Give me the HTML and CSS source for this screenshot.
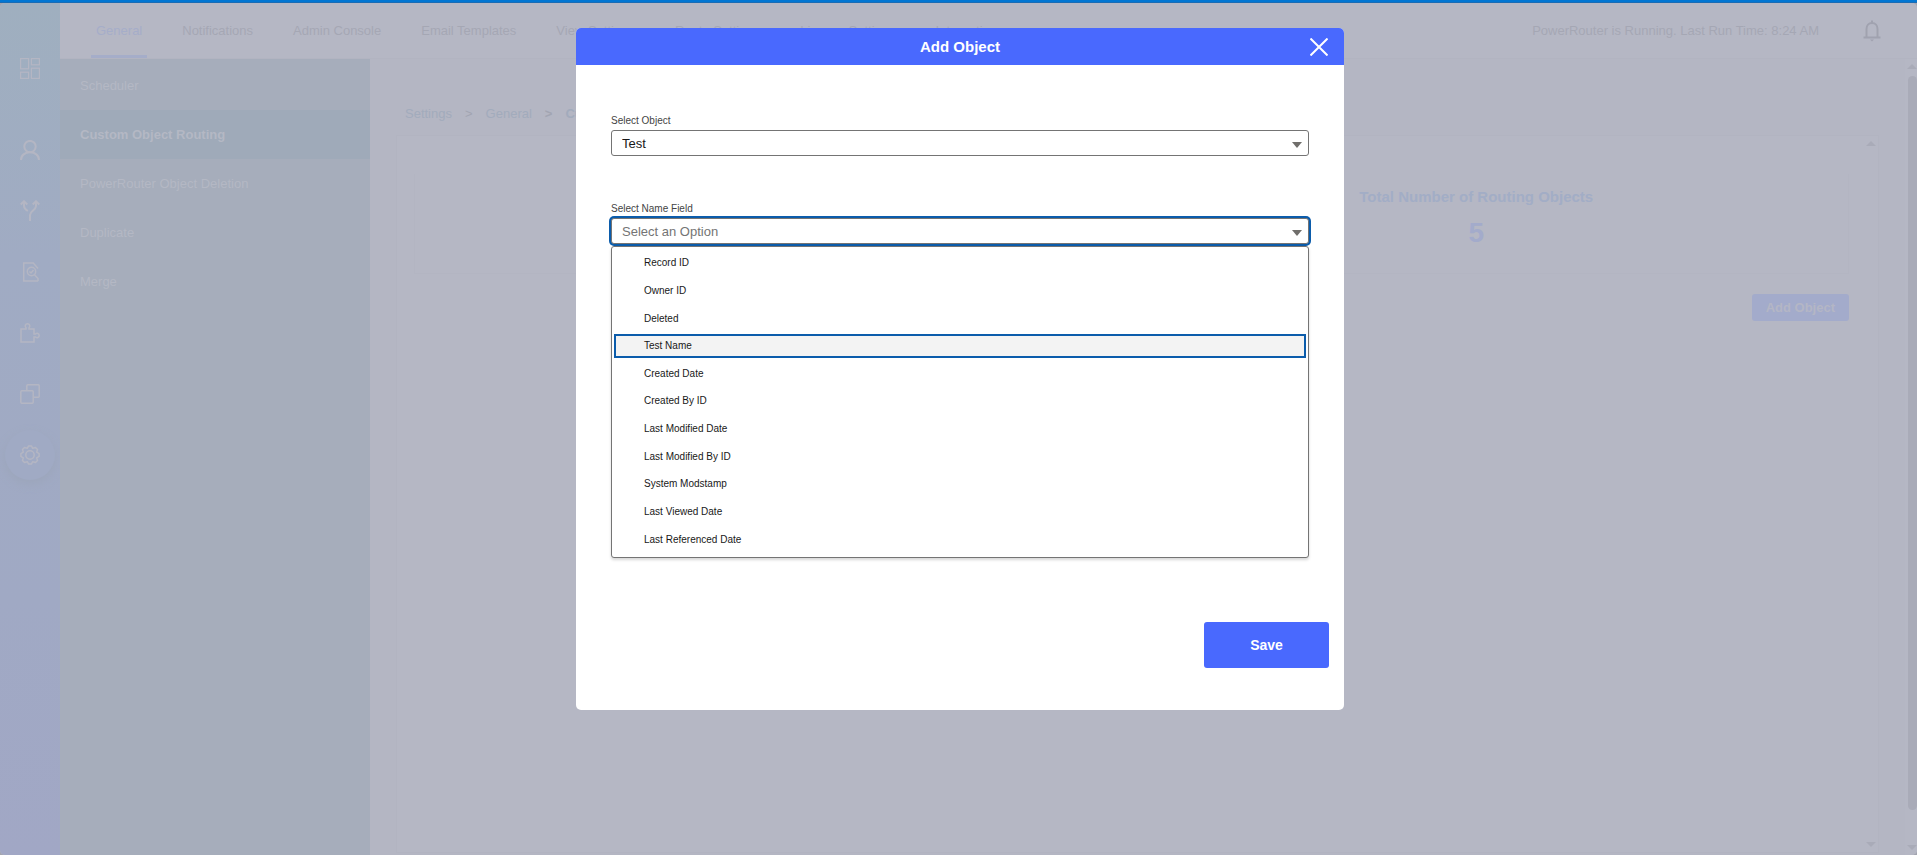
FILE: index.html
```html
<!DOCTYPE html>
<html lang="en">
<head>
    <meta charset="UTF-8">
    <title>PowerRouter - Custom Object Routing</title>
    <link rel="stylesheet" href="styles.css">
</head>
<body>
    <div class="top-strip"></div>

    <div class="app">
        <nav class="rail" aria-label="Main">
            <a href="#" class="rail-link rail-home" aria-label="Dashboard">
                <svg width="20" height="21" viewBox="0 0 20 21" fill="none" stroke="currentColor" stroke-width="1.2">
                    <rect x="0.6" y="0.6" width="8" height="10.2"/>
                    <rect x="11.4" y="0.6" width="8" height="6.2"/>
                    <rect x="0.6" y="14.2" width="8" height="6.2"/>
                    <rect x="11.4" y="10.2" width="8" height="10.2"/>
                </svg>
            </a>
            <a href="#" class="rail-link" aria-label="Users">
                <svg width="20" height="20" viewBox="0 0 20 20" fill="none" stroke="currentColor" stroke-width="2">
                    <circle cx="10" cy="6.6" r="5.7"/>
                    <path d="M1 20c0-4.800 4-7.700 9-7.700s9 2.900 9 7.700"/>
                </svg>
            </a>
            <a href="#" class="rail-link" aria-label="Routes">
                <svg width="20" height="21" viewBox="0 0 20 21" fill="none" stroke="currentColor" stroke-width="2">
                    <path d="M10 21v-6c0-4 6-5 6-9V1.500M4 1.500V6c0 2.200 1.800 3.700 3.800 5"/>
                    <path d="M0.700 4.500L4 1.300l3.300 3.200M12.700 4.500L16 1.300l3.300 3.200"/>
                </svg>
            </a>
            <a href="#" class="rail-link" aria-label="Logs">
                <svg width="20" height="20" viewBox="0 0 20 20" fill="none" stroke="currentColor" stroke-width="1.500">
                    <path d="M18 6.500L13.300 1H3.700v18h14.500"/>
                    <circle cx="11.500" cy="9.500" r="4.200"/>
                    <path d="M9.500 9.500l1.500 1.500 2.500-3M14.500 12.700l3.500 3.800v2.500"/>
                </svg>
            </a>
            <a href="#" class="rail-link" aria-label="Integrations">
                <svg width="20" height="20" viewBox="0 0 20 20" fill="none" stroke="currentColor" stroke-width="1.500">
                    <path d="M1 6h5V4.800C4.500 3 5.300 0.800 7.500 0.800S10.500 3 9 4.800V6h5v5h1.500c1.500-1.300 3.700-.6 3.700 1.500s-2.200 2.800-3.700 1.500H14v5H1z"/>
                </svg>
            </a>
            <a href="#" class="rail-link" aria-label="Duplicates">
                <svg width="20" height="20" viewBox="0 0 20 20" fill="none" stroke="currentColor" stroke-width="1.500">
                    <rect x="0.800" y="6.800" width="12.400" height="12.400" rx="1"/>
                    <path d="M6.800 6.500V1.800a1 1 0 0 1 1-1h10.400a1 1 0 0 1 1 1v10.400a1 1 0 0 1-1 1h-4.700"/>
                </svg>
            </a>
            <a href="#" class="rail-link" aria-label="Settings">
                <span class="rail-active">
                    <svg width="20" height="20" viewBox="0 0 20 20" fill="none" stroke="currentColor" stroke-width="1.500" stroke-linejoin="round">
                        <path d="M8.600 0.900h2.800l1.300 2.400 2.800-.8 2 2-.8 2.700 2.400 1.400v2.800l-2.400 1.400.8 2.700-2 2-2.800-.8-1.300 2.400H8.600l-1.300-2.400-2.800.8-2-2 .8-2.700-2.400-1.400V8.600l2.400-1.400-.8-2.700 2-2 2.800.8z"/>
                        <circle cx="10" cy="10" r="4.200"/>
                    </svg>
                </span>
            </a>
        </nav>

        <div class="page">
            <header class="header">
                <nav class="tabs" aria-label="Settings sections">
                    <a href="#" class="tab tab-active">General</a>
                    <a href="#" class="tab">Notifications</a>
                    <a href="#" class="tab">Admin Console</a>
                    <a href="#" class="tab">Email Templates</a>
                    <a href="#" class="tab">View Settings</a>
                    <a href="#" class="tab">Route Settings</a>
                    <a href="#" class="tab">License Settings</a>
                    <a href="#" class="tab">Integration</a>
                </nav>
                <div class="status">
                    <span>PowerRouter is Running. Last Run Time: 8:24 AM</span>
                    <button type="button" class="bell" aria-label="Alerts">
                        <svg width="18" height="22" viewBox="0 0 18 22" fill="none" stroke="currentColor" stroke-width="2">
                            <path d="M3.500 17V9c0-3.500 2.200-6 5.500-6s5.500 2.500 5.500 6v8M0.500 17.500h17M9 3V0.500"/>
                            <path d="M7 19.500h4l-2 2z" fill="currentColor" stroke="none"/>
                        </svg>
                    </button>
                </div>
            </header>

            <div class="content">
                <nav class="submenu" aria-label="General">
                    <a href="#" class="submenu-link">Scheduler</a>
                    <a href="#" class="submenu-link submenu-active">Custom Object Routing</a>
                    <a href="#" class="submenu-link">PowerRouter Object Deletion</a>
                    <a href="#" class="submenu-link">Duplicate</a>
                    <a href="#" class="submenu-link">Merge</a>
                </nav>

                <main class="main">
                    <div class="breadcrumb">
                        <a href="#">Settings</a>
                        <span>&gt;</span>
                        <a href="#">General</a>
                        <b>&gt;</b>
                        <a href="#"><b>Custom Object Routing</b></a>
                    </div>

                    <section class="card">
                        <div class="card-body">
                            <div class="summary">
                                <div class="total">
                                    <h2>Total Number of Routing Objects</h2>
                                    <strong>5</strong>
                                </div>
                            </div>
                            <button type="button" class="add-button">Add Object</button>
                        </div>
                        <div class="scrollbar card-scrollbar">
                            <span class="arrow-up"></span>
                            <span class="arrow-down"></span>
                        </div>
                    </section>
                </main>

                <div class="scrollbar page-scrollbar">
                    <span class="arrow-up"></span>
                    <span class="thumb"></span>
                    <span class="arrow-down"></span>
                </div>
            </div>
        </div>
    </div>

    <div class="backdrop">
        <div class="modal" role="dialog" aria-modal="true" aria-labelledby="modal-title">
            <div class="modal-header">
                <h1 id="modal-title">Add Object</h1>
                <button type="button" class="close" aria-label="Close">
                    <svg width="18" height="18" viewBox="0 0 18 18" stroke="currentColor" stroke-width="2">
                        <path d="M0.500 0.500l17 17M17.500 0.500l-17 17"/>
                    </svg>
                </button>
            </div>

            <div class="modal-body">
                <div class="field">
                    <label for="object">Select Object</label>
                    <div class="control">
                        <select id="object">
                            <option>Test</option>
                        </select>
                        <span class="caret"></span>
                    </div>
                </div>

                <div class="field">
                    <label for="name-field">Select Name Field</label>
                    <div class="control">
                        <input type="text" id="name-field" class="focused" placeholder="Select an Option" readonly role="combobox" aria-expanded="true" aria-controls="name-options">
                        <span class="caret"></span>
                        <ul class="dropdown" id="name-options" role="listbox">
                            <li role="option">Record ID</li>
                            <li role="option">Owner ID</li>
                            <li role="option">Deleted</li>
                            <li role="option" class="highlighted" aria-selected="true">Test Name</li>
                            <li role="option">Created Date</li>
                            <li role="option">Created By ID</li>
                            <li role="option">Last Modified Date</li>
                            <li role="option">Last Modified By ID</li>
                            <li role="option">System Modstamp</li>
                            <li role="option">Last Viewed Date</li>
                            <li role="option">Last Referenced Date</li>
                        </ul>
                    </div>
                </div>
            </div>

            <div class="modal-footer">
                <button type="button" class="save">Save</button>
            </div>
        </div>
    </div>
</body>
</html>
```
FILE: styles.css
```css
* {
    box-sizing: border-box;
}

body {
    margin: 0;
    height: 100vh;
    display: flex;
    flex-direction: column;
    overflow: hidden;
    font-family: "Liberation Sans", Arial, sans-serif;
    font-size: 13px;
    background-color: #a3a5b0;
    color: #a5a7b4;
}

a {
    color: inherit;
    text-decoration: none;
}

button {
    font-family: inherit;
    border: none;
    cursor: pointer;
}

/* Blue strip above the app */
.top-strip {
    height: 3px;
    flex: none;
    background: linear-gradient(#0176d3 2px, #1a6cb4 2px);
}

.app {
    flex: 1;
    min-height: 0;
    display: flex;
    background-color: #b4b6c3;
    border-radius: 5px;
    overflow: hidden;
}

/* Left icon rail */
.rail {
    width: 60px;
    flex: none;
    padding-top: 35px;
    background: linear-gradient(#9fafbf, #a0abc3 30%, #a0a9c4 70%, #a1a7c5);
    color: #b4b6c3;
}

.rail-link {
    height: 61px;
    display: flex;
    align-items: center;
    justify-content: center;
}

.rail-home {
    margin-bottom: 20px;
}

.rail-active {
    width: 50px;
    height: 50px;
    display: flex;
    align-items: center;
    justify-content: center;
    border-radius: 50%;
    background-color: #a0aac4;
    box-shadow: 0 4px 10px #9ca6bb;
}

.page {
    flex: 1;
    min-width: 0;
    display: flex;
    flex-direction: column;
}

/* Header with tabs */
.header {
    height: 56px;
    flex: none;
    display: flex;
    justify-content: space-between;
    padding: 0 36px 0 31px;
    background-color: #b5b7c4;
    border-bottom: 1px solid #b2b4c1;
}

.tabs {
    display: flex;
    gap: 30px;
}

.tab {
    display: flex;
    align-items: center;
    padding: 3px 5px 0;
    border-bottom: 3px solid transparent;
    white-space: nowrap;
}

.tab-active {
    color: #a5adc9;
    border-bottom-color: #a5adc9;
}

.status {
    display: flex;
    align-items: center;
    gap: 44px;
}

.bell {
    padding: 0;
    line-height: 0;
    background: none;
    color: #a0a2af;
}

.content {
    flex: 1;
    min-height: 0;
    display: flex;
}

/* Second level menu */
.submenu {
    width: 310px;
    flex: none;
    padding-top: 2px;
    background-color: #a6adbb;
    color: #b4b8c4;
}

.submenu-link {
    height: 49px;
    display: flex;
    align-items: center;
    padding-left: 20px;
}

.submenu-active {
    background-color: #9faab9;
    font-weight: bold;
}

.main {
    flex: 1;
    min-width: 0;
    display: flex;
    flex-direction: column;
    padding: 47px 26px 2px;
}

.breadcrumb {
    display: flex;
    gap: 13px;
    padding-left: 9px;
    margin-bottom: 13px;
    line-height: 16px;
    color: #a2abbc;
}

.breadcrumb span,
.breadcrumb b {
    color: #a2a5b2;
}

.breadcrumb a b {
    color: #a2abbc;
}

.card {
    flex: 1;
    display: flex;
    border: 1px solid #b2b4c1;
    background-color: #b5b7c4;
}

.card-body {
    flex: 1;
    padding: 38px 17px 0;
}

.summary {
    display: grid;
    grid-template-columns: 1fr 1fr;
    height: 100px;
    padding-right: 18px;
    border: 1px solid #b3b5c2;
    border-top: none;
}

.total {
    grid-column: 2;
    padding-top: 14px;
    text-align: center;
    color: #a2adc6;
}

.total h2 {
    margin: 0 0 11px;
    font-size: 15px;
    line-height: 18px;
}

.total strong {
    display: block;
    font-size: 28px;
    line-height: 32px;
    color: #a3abcb;
}

.add-button {
    display: block;
    margin: 20px 0 0 auto;
    height: 27px;
    padding: 0 14px;
    border-radius: 3px;
    background-color: #a3abcb;
    color: #b4b6c5;
    font-size: 13px;
    font-weight: bold;
}

/* Scrollbars */
.scrollbar {
    flex: none;
    display: flex;
    flex-direction: column;
    justify-content: space-between;
    align-items: flex-end;
    padding: 5px 0;
}

.card-scrollbar {
    width: 12px;
    padding-right: 2px;
}

.page-scrollbar {
    width: 12px;
    background-color: #b5b7c4;
}

.thumb {
    flex: 1;
    width: 9px;
    margin: 7px 0 35px;
    border-radius: 5px;
    background-color: #a9abb8;
}

.arrow-up,
.arrow-down {
    border: 5px solid transparent;
}

.arrow-up {
    border-top: none;
    border-bottom-color: #a9abb8;
}

.arrow-down {
    border-bottom: none;
    border-top-color: #a9abb8;
}

/* Modal */
.backdrop {
    position: fixed;
    inset: 0;
    display: flex;
    justify-content: center;
    align-items: flex-start;
    padding: 28px 0 0 3px;
}

.modal {
    width: 768px;
    max-width: 100%;
    border-radius: 5px;
    background-color: #fff;
    color: #181818;
}

.modal-header {
    position: relative;
    height: 37px;
    display: flex;
    align-items: center;
    justify-content: center;
    border-radius: 5px 5px 0 0;
    background-color: #4969fe;
    color: #fff;
}

.modal-header h1 {
    margin: 0;
    font-size: 15px;
}

.close {
    position: absolute;
    right: 16px;
    padding: 0;
    line-height: 0;
    background: none;
    color: #fff;
}

.modal-body {
    min-height: 557px;
    display: flex;
    flex-direction: column;
    gap: 45px;
    padding: 48px 35px 0;
}

.field label {
    display: block;
    margin-bottom: 1px;
    font-size: 10px;
    line-height: 16px;
    color: #444;
}

.control {
    position: relative;
}

.control select,
.control input {
    display: block;
    width: 100%;
    height: 26px;
    padding: 0 10px;
    border: 1px solid #747474;
    border-radius: 3px;
    background-color: #fff;
    color: #181818;
    font-family: inherit;
    font-size: 13px;
    appearance: none;
    outline: none;
}

.control input::placeholder {
    color: #747474;
}

.control .focused {
    box-shadow: 0 0 0 2px #0b5cab;
}

.caret {
    position: absolute;
    top: 12px;
    right: 7px;
    border: 5px solid transparent;
    border-top: 6px solid #706e6b;
    border-bottom: none;
    pointer-events: none;
}

.dropdown {
    position: absolute;
    top: 100%;
    left: 0;
    right: 0;
    height: 312px;
    display: grid;
    grid-auto-rows: 1fr;
    row-gap: 4px;
    margin: 2px 0 0;
    padding: 4px 2px 6px;
    list-style: none;
    border: 1px solid #747474;
    border-radius: 3px;
    background-color: #fff;
    box-shadow: 0 2px 3px rgba(0, 0, 0, 0.16);
    font-size: 10px;
}

.dropdown li {
    display: flex;
    align-items: center;
    padding-left: 28px;
    border: 2px solid transparent;
}

.dropdown .highlighted {
    border-color: #0b5cab;
    background-color: #f3f3f3;
}

.modal-footer {
    display: flex;
    justify-content: flex-end;
    padding: 0 15px 42px;
}

.save {
    width: 125px;
    height: 46px;
    border-radius: 3px;
    background-color: #4969fe;
    color: #fff;
    font-size: 14px;
    font-weight: bold;
}
```
